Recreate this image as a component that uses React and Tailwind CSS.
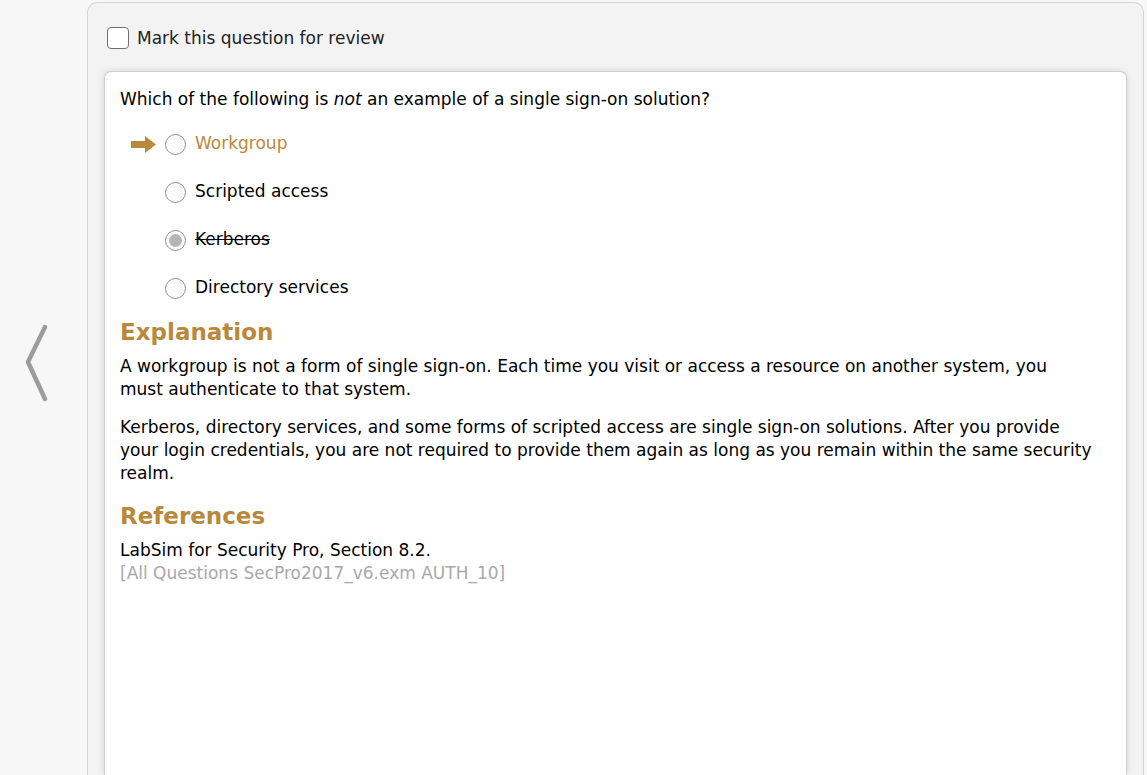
import React from "react";

const gold = "text-[#b8893b]";

function Radio({ checked }) {
  return (
    <span className="relative flex h-[21px] w-[21px] shrink-0 items-center justify-center rounded-full border border-[#949494] bg-[#fbfbfb]">
      {checked && <span className="h-[13px] w-[13px] rounded-full bg-[#b5b5b5]" />}
    </span>
  );
}

function Option({ label, arrow, checked, strike, highlight }) {
  return (
    <div className="flex h-[48px] items-center">
      <div className="flex w-[45px] shrink-0 justify-start pl-[11px]">
        {arrow && (
          <svg width="25" height="17" viewBox="0 0 25 17">
            <path d="M0 5 H14 V0 L25 8.5 L14 17 V12 H0 Z" fill="#b8893b" />
          </svg>
        )}
      </div>
      <Radio checked={checked} />
      <span
        className={`ml-[9px] ${highlight ? gold : "text-black"} ${strike ? "line-through" : ""}`}
      >
        {label}
      </span>
    </div>
  );
}

export default function App() {
  return (
    <div
      className="flex h-[775px] w-[1147px] overflow-hidden bg-[#f7f7f7] text-[17px] text-black"
      style={{ fontFamily: '"DejaVu Sans", Verdana, sans-serif' }}
    >
      <div className="flex w-[87px] shrink-0 items-start pl-[24px] pt-[324px]">
        <svg width="26" height="78" viewBox="0 0 26 78">
          <path d="M21 3 L4 38 L21 75" fill="none" stroke="#9c9c9c" strokeWidth="4.5" strokeLinecap="round" strokeLinejoin="round" />
        </svg>
      </div>
      <div className="mt-[2px] flex w-[1057px] shrink-0 flex-col rounded-t-[10px] border border-b-0 border-[#d4d4d4] bg-[#f3f3f3] px-[16px]">
        <label className="flex h-[68px] items-center gap-[8px] pl-[3px] pt-[3px]">
          <span className="mt-[-1px] h-[22px] w-[22px] rounded-[4px] border border-[#6f6f6f] bg-white" />
          <span className="text-[#222]">Mark this question for review</span>
        </label>
        <div className="flex-1 rounded-t-[7px] border border-b-0 border-[#cfcfcf] bg-white pl-[15px] pr-[34px] pt-[15px] shadow-[0_0_6px_rgba(0,0,0,0.12)]">
          <p className="leading-[24px]">
            Which of the following is <em>not</em> an example of a single sign-on solution?
          </p>
          <div className="mt-[9px]">
            <Option label="Workgroup" arrow highlight />
            <Option label="Scripted access" />
            <Option label="Kerberos" checked strike />
            <Option label="Directory services" />
          </div>
          <h2 className={`mt-[5px] text-[23px] font-bold leading-[30px] ${gold}`}>Explanation</h2>
          <p className="mt-[8px] leading-[23px]">
            A workgroup is not a form of single sign-on. Each time you visit or access a resource on another system, you must authenticate to that system.
          </p>
          <p className="mt-[15px] leading-[23px]">
            Kerberos, directory services, and some forms of scripted access are single sign-on solutions. After you provide your login credentials, you are not required to provide them again as long as you remain within the same security realm.
          </p>
          <h2 className={`mt-[16px] text-[23px] font-bold leading-[30px] ${gold}`}>References</h2>
          <p className="mt-[8px] leading-[23px]">LabSim for Security Pro, Section 8.2.</p>
          <p className="leading-[23px] text-[#a9a9a9]">[All Questions SecPro2017_v6.exm AUTH_10]</p>
        </div>
      </div>
    </div>
  );
}
